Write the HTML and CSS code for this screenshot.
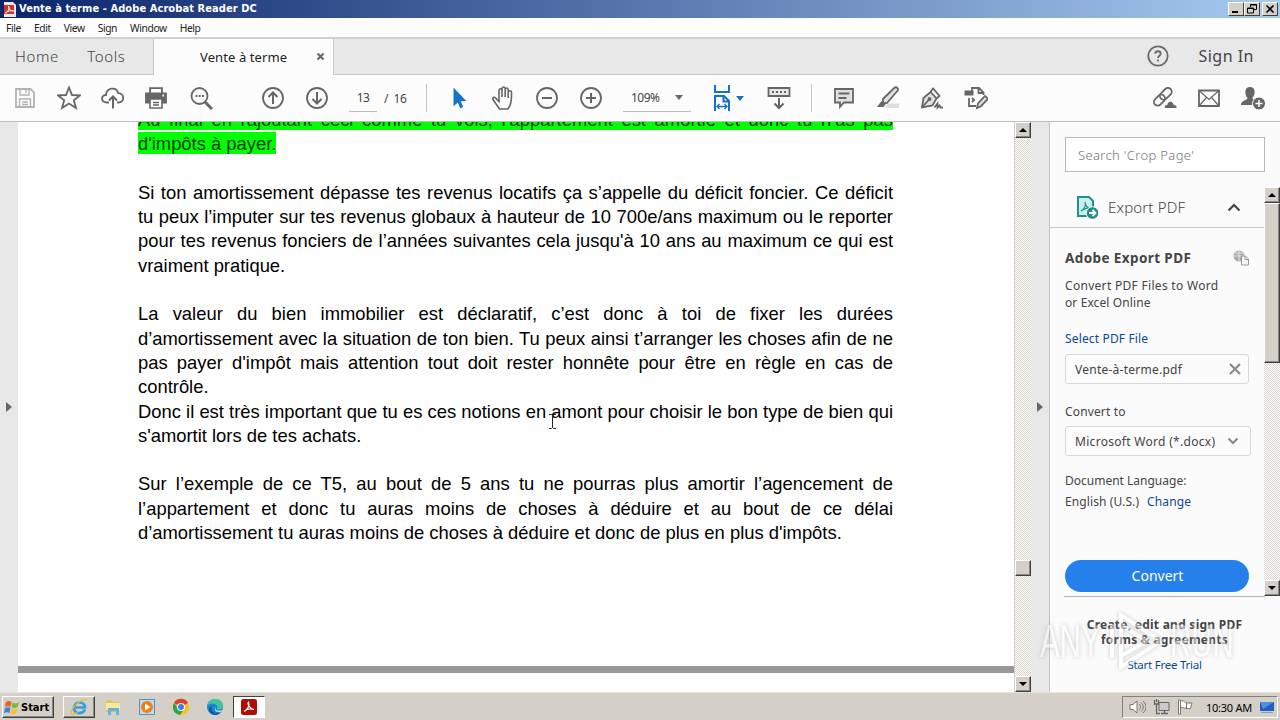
FILE: index.html
```html
<!DOCTYPE html>
<html lang="fr">

<head>
    <meta charset="UTF-8">
    <meta name="viewport" content="width=device-width, initial-scale=1.0">
    <title>Vente à terme - Adobe Acrobat Reader DC</title>
    <link rel="stylesheet" href="styles.css">
</head>

<body>

    <div class="title-bar">
        <svg class="app-icon" width="12" height="15" viewBox="0 0 12 15"><path d="M0 0h9l3 3v12H0z" fill="#f6e4e2"/><path d="M0 3h10v9H0z" fill="#c8362e"/><path d="M1.500 11c3-2 4-5 3-7 0 3 2 5 5 5-3-1-6 0-8 2" fill="none" stroke="#fff"/></svg>
        <span class="title-text">Vente à terme - Adobe Acrobat Reader DC</span>
        <div class="window-btns">
            <button class="win-btn"><svg width="14" height="12"><path d="M3 9h6" stroke="#000" stroke-width="2"/></svg></button>
            <button class="win-btn"><svg width="14" height="12"><path d="M5.500 4V1.500h6v5H9M5 2h7M2.500 5h6v5h-6zM2 5.500h7" fill="none" stroke="#000"/></svg></button>
            <button class="win-btn win-close"><svg width="14" height="12"><path d="M3.500 2.500l7 7M10.500 2.500l-7 7" stroke="#000" stroke-width="1.700"/></svg></button>
        </div>
    </div>

    <div class="menu-bar">
        <span>File</span><span>Edit</span><span>View</span><span>Sign</span><span>Window</span><span>Help</span>
    </div>

    <div class="tab-bar">
        <div class="tab-left">
            <span class="tab-home">Home</span>
            <span class="tab-tools">Tools</span>
        </div>
        <div class="tab-active">
            <span class="tab-name">Vente à terme</span>
            <svg width="9" height="9"><path d="M1.500 1.500l6 6M7.500 1.500l-6 6" stroke="#666" stroke-width="2"/></svg>
        </div>
        <div class="tab-right">
            <svg width="22" height="22" viewBox="0 0 22 22" fill="none" stroke="#6b6b6b" stroke-width="1.800"><circle cx="11" cy="11" r="9.700"/><path d="M8.300 8.700c0-3.300 5.400-3.300 5.400 0 0 2-2.700 2-2.700 4.300M11 14.500v2"/></svg>
            <span class="sign-in">Sign In</span>
        </div>
    </div>

    <div class="toolbar">
        <button class="tool faded"><svg viewBox="0 0 24 24"><path d="M3 3h14.500l3.500 3.500V21H3z"/><path d="M7 3v6h9V3M13 4v3M6.500 21v-8h11v8M9 16h6M9 18.500h6" stroke-width="1.400"/></svg></button>
        <button class="tool"><svg viewBox="0 0 24 24"><path d="M12 1.500l3 7.500 8 .3-6.200 5 2.200 7.700-7-4.500-7 4.500 2.200-7.700L1 9.300 9 9z"/></svg></button>
        <button class="tool"><svg viewBox="0 0 24 24"><path d="M8 16.500H5.500C-.5 16-.2 9 5 9 5.500 1 15.500.5 17.300 7.200c6.500.1 6.500 9.300.2 9.300H16"/><path d="M12 22.500V11M8 14.500l4-4 4 4" stroke-width="2"/></svg></button>
        <button class="tool print"><svg viewBox="0 0 24 24"><path d="M6 7V2.200h12V7"/><path d="M2 7.500h20v9h-4v-4H6v4H2z" fill="#666"/><path d="M6 13h12v9H6zM9 16.500h6M9 19h6" fill="#fcfcfc" stroke-width="1.600"/><path d="M18.500 9.500H20" stroke="#fff"/></svg></button>
        <button class="tool"><svg viewBox="0 0 24 24"><circle cx="10.500" cy="10" r="8"/><path d="M16 16l7 7" stroke-width="3"/><path d="M6.500 10h2M9.700 10h2M13 10h2"/></svg></button>

        <div class="page-nav">
            <button class="tool"><svg viewBox="0 0 24 24"><circle cx="12" cy="12" r="10"/><path d="M12 18V7M7.500 11L12 6.500l4.500 4.500" stroke-width="2"/></svg></button>
            <button class="tool"><svg viewBox="0 0 24 24"><circle cx="12" cy="12" r="10"/><path d="M12 6v11M7.500 13l4.500 4.500 4.500-4.500" stroke-width="2"/></svg></button>
        </div>
        <span class="page-field">13</span>
        <span class="page-total">/ 16</span>
        <i class="sep"></i>

        <button class="tool"><svg viewBox="0 0 24 24"><path d="M6.500 1.500v18.800l4.300-3.800 2.500 5.800 3-1.300-2.600-5.700 5.600-.4z" fill="#1473c8" stroke="none"/></svg></button>
        <button class="tool"><svg viewBox="0 0 24 24"><path d="M8.500 23C6.500 20 3.500 16 2 13.500c-1-2.500 2-3 3-1l3 3V4.500c0-2.300 3-2.300 3 0V11 2.700c0-2.300 3.200-2.300 3.200 0V11 3.700c0-2.300 3-2.300 3 0V12 6.500c0-2.300 3.300-2.300 3.300 0 0 6 .7 11-3.500 16.500z" stroke-width="1.600"/></svg></button>
        <button class="tool"><svg viewBox="0 0 24 24"><circle cx="12" cy="12" r="10"/><path d="M7 12h10" stroke-width="2"/></svg></button>
        <button class="tool"><svg viewBox="0 0 24 24"><circle cx="12" cy="12" r="10"/><path d="M7 12h10M12 7v10" stroke-width="2"/></svg></button>
        <div class="zoom-field"><span>109%</span><i class="caret"></i></div>
        <div class="fit-tool">
            <svg class="blue" width="20" height="26" viewBox="0 0 20 26"><path d="M3 0v7h14V0M3 26V11h9l5 5v10M11.500 11v5.500H17" stroke-width="2"/><path d="M5 21.500h10M7.500 19L5 21.500 7.500 24M12.500 19l2.500 2.500-2.500 2.500" stroke-width="1.400"/></svg>
            <i class="caret caret-blue"></i>
        </div>
        <button class="tool"><svg viewBox="0 0 24 24"><path d="M1.500 2h21v8h-21z" fill="#e8e8e8"/><path d="M5 6h2M9 6h2M13 6h2M17 6h2M12 12v10M7.500 17.500L12 22l4.500-4.500" stroke-width="2"/></svg></button>
        <i class="sep sep-tight"></i>

        <button class="tool"><svg viewBox="0 0 24 24"><path d="M3 3h18v13.500h-9L8 21v-4.500H3z" fill="#e1e1e1"/><path d="M6.500 7.500h11M6.500 12h8"/></svg></button>
        <button class="tool"><svg viewBox="0 0 24 24"><path d="M12 17.500h11V22H9z" fill="#ddd" stroke="none"/><path d="M7 13L18.500 1.800c2-1.500 4.500 1 3 3L11 17l-4 .500z" fill="#e1e1e1"/><path d="M5.500 15l4 3.500-2 2.500H1z" fill="#666" stroke="none"/></svg></button>
        <button class="tool"><svg viewBox="0 0 24 24"><path d="M2 21.500L3.500 12l7-6 6 6.500-4 7z" fill="#e1e1e1"/><path d="M10.500 6L13 2.500l6.500 7.500-3 2.500M2 21.500l7-8M14.500 21.500l3-4v4l2-2 1 2H23"/><circle cx="9.500" cy="13" r="1"/></svg></button>
        <button class="tool"><svg viewBox="0 0 24 24"><path d="M5 12v8h7M8 5V2h7l4.500 4.500V9M14.500 2v5h5M8 12l2 2-2 2"/><path d="M.5 4.500h9v5h-9z" fill="#666" stroke="none"/><path d="M13 22l1-4.500L21 10l3 2.700-7 7.500z" fill="#e1e1e1"/></svg></button>

        <div class="share-tools">
            <button class="tool"><svg viewBox="0 0 24 24"><g transform="rotate(-45 10 11)"><rect x="-1" y="7" width="12.500" height="7.500" rx="3.700"/><rect x="7.500" y="7" width="13.500" height="7.500" rx="3.700"/></g><path d="M12 22.500c-1.500-3 .5-4 2-3.800.5-4.500 6-4.500 7 0 3 0 3.500 2 2.500 3.800z" fill="#666" stroke="#fcfcfc" stroke-width="1"/></svg></button>
            <button class="tool"><svg viewBox="0 0 24 24"><path d="M2 4.500h20v15.500H2z"/><path d="M2 4.500l10 9 10-9M2 20l7.500-8.500M22 20l-7.500-8.500" stroke-width="1.200"/></svg></button>
            <button class="tool"><svg viewBox="0 0 24 24"><path d="M9 1c6 0 5.500 8 2.500 10.500 0 2 3 2 3.500 3.500l-1 4H0c0-5 6.500-4.500 6.500-7C3.500 9 3 1 9 1z" fill="#666" stroke="none"/><circle cx="18" cy="17.500" r="6.500" fill="#666" stroke="#fcfcfc" stroke-width="1"/><path d="M14.500 17.500h7M18 14v7" stroke="#fff" stroke-width="1.500"/></svg></button>
        </div>
    </div>

    <div class="main">
        <div class="side-strip left-strip"><i class="arrow-right"></i></div>

        <div class="document">
            <div class="page">
                <p class="line full"><mark>Au final en rajoutant ceci comme tu vois, l’appartement est amortie et donc tu n’as pas</mark></p>
                <p class="line"><mark>d'impôts à payer.</mark></p>
                <p class="line gap full">Si ton amortissement dépasse tes revenus locatifs ça s’appelle du déficit foncier. Ce déficit</p>
                <p class="line full">tu peux l’imputer sur tes revenus globaux à hauteur de 10 700e/ans maximum ou le reporter</p>
                <p class="line full">pour tes revenus fonciers de l’années suivantes cela jusqu'à 10 ans au maximum ce qui est</p>
                <p class="line">vraiment pratique.</p>
                <p class="line gap full">La valeur du bien immobilier est déclaratif, c’est donc à toi de fixer les durées</p>
                <p class="line full">d’amortissement avec la situation de ton bien. Tu peux ainsi t’arranger les choses afin de ne</p>
                <p class="line full">pas payer d'impôt mais attention tout doit rester honnête pour être en règle en cas de</p>
                <p class="line">contrôle.</p>
                <p class="line full">Donc il est très important que tu es ces notions en amont pour choisir le bon type de bien qui</p>
                <p class="line">s'amortit lors de tes achats.</p>
                <p class="line gap full">Sur l’exemple de ce T5, au bout de 5 ans tu ne pourras plus amortir l’agencement de</p>
                <p class="line full">l’appartement et donc tu auras moins de choses à déduire et au bout de ce délai</p>
                <p class="line">d’amortissement tu auras moins de choses à déduire et donc de plus en plus d'impôts.</p>
            </div>
            <div class="page-break"></div>
            <svg class="text-cursor" width="9" height="17"><path d="M1 1.500h2.500l1 1 1-1H8M4.500 2v13M1 15.500h2.500l1-1 1 1H8" fill="none" stroke="#222"/></svg>
        </div>

        <div class="scrollbar">
            <div class="scroll-btn"><i class="up"></i></div>
            <div class="scroll-thumb doc-thumb"></div>
            <div class="scroll-btn scroll-end"><i class="down"></i></div>
        </div>
        <div class="side-strip right-strip"><i class="arrow-right"></i></div>

        <div class="panel">
            <div class="search-box">Search 'Crop Page'</div>
            <div class="panel-scroll">
                <div class="panel-body">
                    <div class="export-head">
                        <svg width="24" height="25" viewBox="0 0 24 25"><path d="M2 2h11l4 4v15H2z" fill="#c9efee" stroke="#238f8d" stroke-width="2"/><path d="M5 16c4-2 5-6 4-9 0 4 3 6 5 6-3-.5-6 1-9 3" fill="none" stroke="#238f8d" stroke-width="1.200"/><circle cx="16.500" cy="18" r="6.300" fill="#238f8d" stroke="#fbfbfb"/><path d="M13 18h6M16.500 15l3 3-3 3" fill="none" stroke="#fff" stroke-width="1.800"/></svg>
                        <span class="export-name">Export PDF</span>
                        <svg width="14" height="9"><path d="M1.500 7.500L7 2l5.500 5.500" fill="none" stroke="#444" stroke-width="2.200"/></svg>
                    </div>
                    <div class="export-form">
                        <div class="form-title">
                            <span>Adobe Export PDF</span>
                            <svg width="17" height="16" viewBox="0 0 17 16"><circle cx="6" cy="6" r="5.500" fill="#aaa"/><path d="M6 0v12M0 6h12M2 3h8" stroke="#e4e4e4" fill="none"/><path d="M8.500 6h4l3 3v6h-7z" fill="#f4f4f4" stroke="#999"/><path d="M12 6v3.500h3.500" fill="none" stroke="#999"/></svg>
                        </div>
                        <p class="form-text">Convert PDF Files to Word<br><span class="excel">or Excel Online</span></p>
                        <a class="select-link">Select PDF File</a>
                        <div class="input-box file-box"><span>Vente-à-terme.pdf</span><svg width="12" height="12"><path d="M1 1l10 10M11 1L1 11" stroke="#888" stroke-width="2"/></svg></div>
                        <p class="convert-label">Convert to</p>
                        <div class="input-box type-box"><span>Microsoft Word (*.docx)</span><svg width="12" height="8"><path d="M1.500 1.500L6 6l4.500-4.500" fill="none" stroke="#888" stroke-width="2"/></svg></div>
                        <p class="lang-label">Document Language:</p>
                        <p class="lang-value"><span>English (U.S.)</span><a>Change</a></p>
                        <button class="convert-btn">Convert</button>
                    </div>
                </div>
                <div class="scrollbar panel-bar">
                    <div class="scroll-btn"><i class="up"></i></div>
                    <div class="scroll-thumb panel-thumb"></div>
                    <div class="scroll-btn scroll-end"><i class="down"></i></div>
                </div>
            </div>
            <div class="panel-foot">
                <p class="foot-one">Create, edit and sign PDF</p>
                <p class="foot-two">forms &amp; agreements</p>
                <a class="trial">Start Free Trial</a>
            </div>
        </div>
    </div>

    <div class="taskbar">
        <button class="start-btn">
            <svg width="16" height="15" viewBox="0 0 16 15"><path d="M2 2c2-1.500 4-1 5.500 0L6.500 7C5 6 3 6 1 7z" fill="#e8632c"/><path d="M8.500 2.500C10 3.500 12 4 15 2l-1.500 5c-2 1.500-4 1.200-6 .3z" fill="#7db93c"/><path d="M1 8c2-1 4-1 5.500 0l-1.200 5C4 12 2 12 0 13z" fill="#3f83d4"/><path d="M7.500 8.500c2 1 4 1 6-.3l-1.300 5c-2 1.500-4 1.300-6 .3z" fill="#f4c12f"/></svg>
            <span>Start</span>
        </button>
        <div class="task raised"><svg width="18" height="18" viewBox="0 0 18 18"><path d="M14.800 11.500c-2 5-10.500 5-10.800-1.500C4 3 14.500 2.500 15 9.500H5" fill="none" stroke="#3a9fd8" stroke-width="2.700"/><path d="M1.500 16C-1 12 12-1 17 2M1.500 16c1 1.300 4-.5 6-2" fill="none" stroke="#e6b83c" stroke-width="1.300"/></svg></div>
        <div class="task"><svg width="18" height="18" viewBox="0 0 18 18"><path d="M2 2h5l1 2h7v10H2z" fill="#e3c45c"/><path d="M2 5h14v7H2z" fill="#f7e8a4"/><path d="M4 17v-7h11v7h-3v-4H7v4z" fill="#64b3d6"/></svg></div>
        <div class="task"><svg width="18" height="18" viewBox="0 0 18 18"><path d="M1.500 1.500h15v15h-15z" fill="#bddcf2" stroke="#5990bf"/><circle cx="9" cy="9" r="6" fill="#ef7d18"/><path d="M7 5.500l5.500 3.500L7 12.500z" fill="#fff"/></svg></div>
        <div class="task"><svg width="18" height="18" viewBox="0 0 18 18"><circle cx="9" cy="9" r="8" fill="#fbc116"/><path d="M9 9L2 5a8 8 0 0 1 14 0z" fill="#e33b2e"/><path d="M9 9h-4L2 5a8 8 0 0 0 6 12l4-6z" fill="#2da14c"/><circle cx="9" cy="9" r="4" fill="#fff"/><circle cx="9" cy="9" r="3" fill="#3b7ded"/></svg></div>
        <div class="task"><svg width="18" height="18" viewBox="0 0 18 18"><circle cx="9" cy="9" r="8" fill="#1686d1"/><path d="M1.500 7C4-1.500 17-1 17 8c0 4-5 4-6 3 2-4-3-7-9.500-4z" fill="#43c4a1"/><path d="M6 8c-2 5 3 9 9 6-3 4-9 3.500-11 .5S3 9 6 8z" fill="#1258a5"/><path d="M10 8.500c-2 3.500 1 5 6.500 3.500L15 14c-5 1-8-2-5-5.500z" fill="#d4d0c8"/></svg></div>
        <div class="task pressed"><svg width="16" height="16" viewBox="0 0 16 16"><rect width="16" height="16" rx="2.500" fill="#b30b00"/><path d="M3 12.500c4-2 6-7 4.500-9.500-1.500 2 1.500 7 5.500 7.500-3-1-7.500-.5-10 2" fill="none" stroke="#fff" stroke-width="1.200"/></svg></div>

        <div class="tray">
            <svg width="17" height="16" viewBox="0 0 17 16" fill="none" stroke="#777"><path d="M1 5.500h3L8 2v12l-4-3.500H1z" fill="#fff"/><path d="M10 5c2 2 2 4 0 6M12 3.500c3 3 3 6 0 9M14 2c4 4 4 8 0 12"/></svg>
            <svg width="17" height="16" viewBox="0 0 17 16" fill="none" stroke="#666"><path d="M6 3.500h10v8H6z" fill="#ccc"/><path d="M8 14.500h7M11.500 12v2M1.500 1v4h4V1M3.500 5v9.500H7M3.500 0v3" stroke-width="1.300"/></svg>
            <svg width="17" height="16" viewBox="0 0 17 16" fill="#fff" stroke="#777"><path d="M1.500 1h2v14h-2zM3.500 2c4-1 4 2 6 1.500V9c-3 1-3-1.500-6-.5zM9.500 4H15l-1.500 5.500H9"/></svg>
            <span class="clock">10:30 AM</span>
            <svg width="16" height="14"><path d="M1 2h14v9H1z" fill="#1d5fc2"/><path d="M1 2h14L4 9z" fill="#4f8fe0"/><path d="M2 12.500h12" stroke="#7aa3d6"/></svg>
        </div>
    </div>

    <div class="watermark">
        <span>ANY</span>
        <svg width="56" height="62" viewBox="0 0 56 62"><path d="M14 15V5l40 26-40 26V44M14 15l26 16-26 15zM5 14v34" fill="none" stroke="#fff" stroke-width="4"/></svg>
        <span>RUN</span>
    </div>

</body>

</html>
```
FILE: styles.css
```css
* {
    box-sizing: border-box;
}

body {
    margin: 0;
    width: 1280px;
    height: 720px;
    overflow: hidden;
    display: flex;
    flex-direction: column;
    background-color: #fff;
    font-family: "Noto Sans", sans-serif;
    color: #444;
    position: relative;
}

p {
    margin: 0;
}

button {
    padding: 0;
    border: none;
    background: none;
    font-family: inherit;
}

svg {
    display: block;
    flex: none;
}

span,
a {
    white-space: nowrap;
}

/* title bar and menu */
.title-bar {
    height: 18px;
    flex: none;
    display: flex;
    align-items: center;
    padding: 0 2px 0 4px;
    background: linear-gradient(to right, #0a246a, #a6caf0);
}

.title-text {
    margin-left: 3px;
    color: #fff;
    font-family: "DejaVu Sans Condensed", "DejaVu Sans", sans-serif;
    font-weight: bold;
    font-size: 11px;
    line-height: 18px;
    letter-spacing: 0.08px;
}

.window-btns {
    margin-left: auto;
    display: flex;
}

.win-btn {
    width: 16px;
    height: 14px;
    background-color: #d4d0c8;
    border: 1px solid;
    border-color: #fff #404040 #404040 #fff;
}

.win-close {
    margin-left: 2px;
}

.menu-bar {
    height: 19px;
    flex: none;
    display: flex;
    gap: 13px;
    padding-left: 6px;
    background-color: #fdfdfd;
    font-size: 10.3px;
    line-height: 20px;
    letter-spacing: -0.4px;
    color: #222;
}

/* tabs */
.tab-bar {
    height: 38px;
    flex: none;
    display: flex;
    border-top: 2px solid #cfcfcf;
    background-color: #e8e8e8;
}

.tab-left {
    width: 154px;
    padding-left: 15px;
    border-right: 1px solid #c8c8c8;
    border-bottom: 1px solid #c8c8c8;
    font-weight: 300;
    font-size: 15px;
    line-height: 35px;
    letter-spacing: 0.6px;
}

.tab-tools {
    margin-left: 24px;
}

.tab-active {
    width: 179px;
    display: flex;
    align-items: center;
    padding-left: 46px;
    background-color: #fcfcfc;
    font-size: 13px;
    letter-spacing: 0.1px;
    color: #222;
}

.tab-active svg {
    margin-left: 29px;
    margin-bottom: 1px;
}

.tab-right {
    flex: 1;
    display: flex;
    align-items: center;
    justify-content: flex-end;
    padding-right: 26px;
    padding-bottom: 1px;
    border-left: 1px solid #c8c8c8;
    border-bottom: 1px solid #c8c8c8;
}

.sign-in {
    margin-left: 29px;
    font-size: 16px;
    letter-spacing: 0.5px;
}

/* toolbar */
.toolbar {
    height: 47px;
    flex: none;
    display: flex;
    align-items: center;
    padding: 0 5px 0 3px;
    background-color: #fcfcfc;
    border-bottom: 1px solid #bdbdbd;
}

.tool {
    width: 44px;
    height: 46px;
    flex: none;
    display: flex;
    align-items: center;
    justify-content: center;
}

.toolbar svg {
    fill: none;
    stroke: #666;
    stroke-width: 1.8;
}

.tool svg {
    width: 24px;
    height: 24px;
}

.toolbar .faded svg {
    stroke: #b2b2b2;
}

.toolbar .print {
    padding-right: 2px;
}

.toolbar .blue {
    stroke: #1473c8;
}

.page-nav {
    display: flex;
    margin-left: 28px;
}

.page-field {
    width: 28px;
    height: 28px;
    margin-left: 10px;
    border-bottom: 1px solid #bbb;
    text-align: center;
    font-size: 12px;
    line-height: 28px;
    letter-spacing: -0.5px;
}

.page-total {
    width: 49px;
    padding-left: 7px;
    font-size: 12px;
    letter-spacing: -0.5px;
    word-spacing: 3px;
}

.sep {
    width: 1px;
    height: 28px;
    margin-right: 10px;
    background-color: #c4c4c4;
}

.sep-tight {
    margin-left: 10px;
}

.zoom-field {
    width: 68px;
    height: 28px;
    margin-left: 10px;
    padding: 0 8px;
    display: flex;
    align-items: center;
    justify-content: space-between;
    border-bottom: 1px solid #bbb;
    font-size: 12px;
    letter-spacing: -0.5px;
}

.caret {
    border: 4px solid transparent;
    border-top: 5px solid #666;
    border-bottom: none;
}

.caret-blue {
    border-top-color: #1473c8;
}

.fit-tool {
    width: 66px;
    padding-left: 21px;
    display: flex;
    align-items: center;
    gap: 4px;
}

.share-tools {
    display: flex;
    margin-left: auto;
}

/* document area */
.main {
    height: 570px;
    flex: none;
    display: flex;
}

.side-strip {
    width: 18px;
    flex: none;
    display: flex;
    align-items: center;
    justify-content: center;
    background-color: #e8e8e8;
}

.right-strip {
    width: 19px;
    border-right: 1px solid #c4c4c4;
}

.arrow-right {
    border: 5px solid transparent;
    border-left: 6px solid #666;
    border-right: none;
}

.document {
    width: 996px;
    flex: none;
    position: relative;
    overflow: hidden;
}

.page {
    height: 544px;
    padding-left: 120px;
    margin-top: -14px;
    font-family: "Liberation Sans", Arial, sans-serif;
    font-size: 18.4px;
    color: #000;
}

.line {
    width: 755px;
    height: 24.3px;
    line-height: 24.3px;
    white-space: nowrap;
}

.full {
    text-align-last: justify;
    white-space: normal;
}

.gap {
    margin-top: 24.3px;
}

mark {
    padding-top: 1px;
    background-color: #00ff00;
    color: #063c06;
}

.page-break {
    height: 7px;
    margin-top: 14px;
    background-color: #999;
}

.text-cursor {
    position: absolute;
    left: 530px;
    top: 291px;
}

/* classic scrollbars */
.scrollbar {
    width: 17px;
    flex: none;
    display: flex;
    flex-direction: column;
    border-left: 1px solid #d0d0c8;
    background: repeating-conic-gradient(#d8d6cc 0 25%, #fff 0 50%) 0 0 / 2px 2px;
}

.scroll-btn,
.scroll-thumb {
    width: 16px;
    height: 16px;
    flex: none;
    display: flex;
    align-items: center;
    justify-content: center;
    background-color: #d4d0c8;
    border: 1px solid;
    border-color: #fff #404040 #404040 #fff;
    box-shadow: inset -1px -1px #888;
}

.scroll-end {
    margin-top: auto;
}

.up {
    border: 4px solid transparent;
    border-bottom-color: #000;
    border-top: none;
}

.down {
    border: 4px solid transparent;
    border-top-color: #000;
    border-bottom: none;
}

.doc-thumb {
    margin-top: 422px;
}

.panel-thumb {
    height: 160px;
}

/* tools panel */
.panel {
    width: 230px;
    display: flex;
    flex-direction: column;
    background-color: #fbfbfb;
    font-size: 12px;
    line-height: 17px;
}

.search-box {
    width: 200px;
    height: 35px;
    margin: 15px 0 15px 15px;
    padding-left: 12px;
    flex: none;
    border: 1px solid #b8b8b8;
    background-color: #fff;
    font-weight: 300;
    font-size: 13px;
    line-height: 34px;
    letter-spacing: 0.35px;
    color: #777;
}

.panel-scroll {
    height: 409px;
    flex: none;
    display: flex;
}

.panel-body {
    width: 214px;
}

.panel-bar {
    width: 16px;
    border-left: none;
}

.export-head {
    height: 41px;
    display: flex;
    align-items: center;
    padding-left: 26px;
    border-bottom: 1px solid #c8c8c8;
}

.export-name {
    width: 119px;
    margin-left: 8px;
    font-weight: 300;
    font-size: 15px;
    letter-spacing: 0.15px;
}

.export-form {
    display: flex;
    flex-direction: column;
    align-items: flex-start;
    padding: 21px 15px 0;
}

.form-title {
    width: 185px;
    height: 18px;
    display: flex;
    align-items: center;
    justify-content: space-between;
    font-weight: bold;
    font-size: 13.5px;
    letter-spacing: 0.4px;
}

.form-text {
    margin-top: 10px;
    letter-spacing: 0.3px;
}

.excel {
    letter-spacing: 0.1px;
}

.export-form a,
.trial {
    color: #0a4a94;
}

.select-link {
    margin-top: 19px;
    letter-spacing: 0.15px;
}

.input-box {
    width: 184px;
    height: 30px;
    display: flex;
    align-items: center;
    justify-content: space-between;
    padding: 0 7px 0 9px;
    border: 1px solid #d8d8d8;
    border-radius: 3px;
    letter-spacing: 0.25px;
}

.file-box {
    margin-top: 7px;
}

.type-box {
    width: 186px;
    margin-top: 6px;
    padding-right: 11px;
    letter-spacing: 0.3px;
}

.convert-label {
    margin-top: 19px;
    letter-spacing: 0.15px;
}

.lang-label {
    margin-top: 16px;
}

.lang-value {
    display: flex;
    gap: 8px;
    margin-top: 4px;
    letter-spacing: 0.1px;
}

.convert-btn {
    width: 184px;
    height: 32px;
    margin-top: 50px;
    padding: 0 0 2px 1px;
    border-radius: 16px;
    background-color: #2680eb;
    color: #fff;
    font-size: 14px;
}

.panel-foot {
    height: 96px;
    margin-left: 14px;
    margin-right: 15px;
    padding-top: 20px;
    border-top: 1px solid #b4b4b4;
    text-align: center;
    line-height: 15px;
}

.foot-one,
.foot-two {
    font-weight: bold;
    letter-spacing: 0.25px;
}

.trial {
    display: block;
    margin-top: 10px;
    font-size: 11.5px;
    letter-spacing: -0.25px;
}

/* taskbar */
.taskbar {
    height: 28px;
    flex: none;
    display: flex;
    align-items: center;
    padding: 3px 2px 2px;
    border-top: 1px solid #e8e5de;
    background-color: #d4d0c8;
    color: #000;
}

.start-btn,
.raised {
    border: 1px solid;
    border-color: #fff #404040 #404040 #fff;
    box-shadow: inset -1px -1px #888;
}

.start-btn {
    width: 52px;
    height: 22px;
    margin-right: 9px;
    display: flex;
    align-items: center;
    gap: 1px;
    padding-left: 1px;
    font-family: "DejaVu Sans Condensed", "DejaVu Sans", sans-serif;
    font-weight: bold;
    font-size: 11px;
    color: #000;
}

.task {
    width: 32px;
    height: 22px;
    margin-right: 2px;
    display: flex;
    align-items: center;
    justify-content: center;
}

.pressed {
    background-color: #fff;
    border: 1px solid;
    border-color: #404040 #fff #fff #404040;
}

.tray {
    width: 156px;
    height: 22px;
    margin-left: auto;
    display: flex;
    align-items: center;
    gap: 7px;
    padding: 0 1px 0 6px;
    border: 1px solid;
    border-color: #808080 #fff #fff #808080;
}

.clock {
    margin-left: 5px;
    font-size: 11px;
    letter-spacing: -0.25px;
}

/* logo lying over the panel footer */
.watermark {
    position: absolute;
    left: 1040px;
    top: 610px;
    display: flex;
    align-items: center;
    gap: 7px;
    opacity: 0.5;
    font-family: "Liberation Sans", Arial, sans-serif;
    font-size: 46px;
    color: #fff;
    filter: drop-shadow(0 0 2px #999);
}

.watermark span {
    width: 60px;
    transform: scaleX(0.64);
    transform-origin: left;
}
```
